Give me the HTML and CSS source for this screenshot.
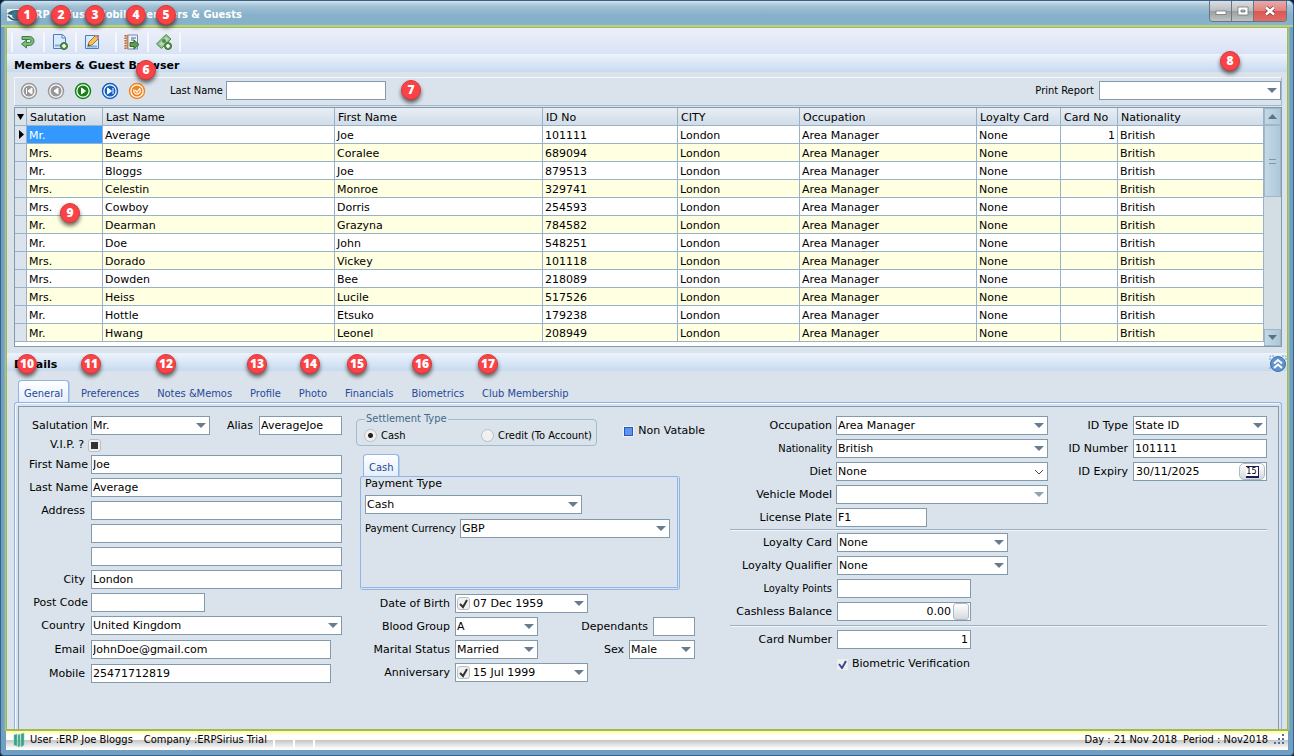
FILE: index.html
```html
<!DOCTYPE html>
<html lang="en">

<head>
    <meta charset="UTF-8">
    <meta name="viewport" content="width=device-width, initial-scale=1.0">
    <title>ERP Sirius - Mobile Members &amp; Guests</title>
    <link rel="stylesheet" href="styles.css">
</head>

<body>
    <div class="window">
        <header class="titlebar">
            <svg class="app-icon" width="18" height="12" viewBox="0 0 18 12">
                <rect width="18" height="12" fill="#e9f1f5" />
                <path d="M0 5C4 0 12 0 18 3v2C12 2 8 3 5 6z" fill="#2d6274" />
                <circle cx="9" cy="6" r="4" fill="#3b7f93" />
                <path d="M1 7c4 5 10 4 13 3" fill="none" stroke="#275668" stroke-width="1.5" />
            </svg>
            <h1>ERP Sirius - Mobile Members &amp; Guests</h1>
            <div class="win-buttons">
                <button type="button" aria-label="Minimize">
                    <svg width="12" height="12" viewBox="0 0 12 12"><rect x="1" y="6" width="10" height="3.500" fill="#fff" stroke="#777" stroke-width=".8" /></svg>
                </button>
                <button type="button" aria-label="Maximize">
                    <svg width="12" height="12" viewBox="0 0 12 12"><path d="M1 2h10v8H1zM4 5v2h4V5z" fill="#fff" fill-rule="evenodd" stroke="#777" stroke-width=".8" /></svg>
                </button>
                <button type="button" class="close" aria-label="Close">
                    <svg width="12" height="12" viewBox="0 0 12 12"><path d="M2 2.500l8 7M10 2.500l-8 7" stroke="#7d3a3a" stroke-width="4" /><path d="M2 2.500l8 7M10 2.500l-8 7" stroke="#fff" stroke-width="2.600" /></svg>
                </button>
            </div>
        </header>

        <main class="client">
            <nav class="toolbar">
                <button type="button" aria-label="Back">
                    <svg width="16" height="16" viewBox="0 0 16 16"><path d="M2 2.500h7.500a4.500 4.500 0 0 1 0 9H6.500V14L1.500 10l5-4v2.500h3a1.500 1.500 0 0 0 0-3H2z" fill="#7fb872" stroke="#3c8044" /></svg>
                </button>
                <button type="button" aria-label="New">
                    <svg width="16" height="16" viewBox="0 0 16 16"><path d="M1.500.500h9l3 3v11h-12z" fill="#d9eaff" stroke="#4a7cb8" /><path d="M10 1v3h3" fill="#fff" stroke="#4a7cb8" /><path d="M3 11.500h7" stroke="#7fa9dc" stroke-width="2" /><circle cx="12" cy="12" r="3.500" fill="#5f9450" stroke="#38702f" /><path d="M12 10v4M10 12h4" stroke="#fff" stroke-width="1.500" /></svg>
                </button>
                <button type="button" aria-label="Edit">
                    <svg width="16" height="16" viewBox="0 0 16 16"><path d="M1.500 1.500h13v13h-13z" fill="#d9eaff" stroke="#4a7cb8" /><path d="M3 12.500h10" stroke="#7fa9dc" stroke-width="2" /><path d="M4 12l1-4 7-7 3 3-7 7z" fill="#f5c35c" stroke="#a67428" /><path d="M11.500 1.500l3 3" stroke="#e08b85" stroke-width="2" /><path d="M4 12l.500-2 1.500 1.500z" fill="#333" /></svg>
                </button>
                <button type="button" class="gap-before" aria-label="Export">
                    <svg width="16" height="16" viewBox="0 0 16 16"><path d="M3.500 1h10v14h-10z" fill="#eef3fa" stroke="#6f87ab" /><path d="M1.500 1v14" stroke="#b5622e" stroke-width="2" stroke-dasharray="1.500 1" /><path d="M3.500 1v14" stroke="#c98256" stroke-width="2" /><path d="M7 4h5M7 6h3" stroke="#3d62a1" /><path d="M6 8.500h4V6l5 4.500-5 4.500v-2.500H6z" fill="#5f9e4c" stroke="#2f6d2d" /></svg>
                </button>
                <button type="button" aria-label="Add funds">
                    <svg width="16" height="16" viewBox="0 0 16 16"><path d="M.500 10l9.500-9.500 5 4.500-9.500 9.500z" fill="#8cbf88" stroke="#4d8b54" /><path d="M3 10l7-7 3 2-7 7z" fill="#b9dbb2" /><circle cx="8" cy="7" r="2" fill="#4d8b54" /><circle cx="12" cy="12" r="3.500" fill="#5f9450" stroke="#38702f" /><path d="M12 10v4M10 12h4" stroke="#fff" stroke-width="1.500" /></svg>
                </button>
            </nav>

            <h2 class="band">Members &amp; Guest Browser</h2>

            <section class="browser">
                <div class="search">
                    <div class="nav-buttons">
                        <button type="button" class="nav-grey" aria-label="First"><svg width="18" height="18" viewBox="0 0 18 18"><circle class="ring" cx="9" cy="9" r="7.500" /><circle class="disc" cx="9" cy="9" r="5.500" /><path d="M6.500 6v6M12 6L8 9l4 3z" class="glyph" /></svg></button>
                        <button type="button" class="nav-grey" aria-label="Previous"><svg width="18" height="18" viewBox="0 0 18 18"><circle class="ring" cx="9" cy="9" r="7.500" /><circle class="disc" cx="9" cy="9" r="5.500" /><path d="M11 6L7 9l4 3z" class="glyph" /></svg></button>
                        <button type="button" class="nav-green" aria-label="Next"><svg width="18" height="18" viewBox="0 0 18 18"><circle class="ring" cx="9" cy="9" r="7.500" /><circle class="disc" cx="9" cy="9" r="5.500" /><path d="M7.500 6l4 3-4 3z" class="glyph" /></svg></button>
                        <button type="button" class="nav-blue" aria-label="Last"><svg width="18" height="18" viewBox="0 0 18 18"><circle class="ring" cx="9" cy="9" r="7.500" /><circle class="disc" cx="9" cy="9" r="5.500" /><path d="M6.500 6l4 3-4 3zM12 6v6" class="glyph" /></svg></button>
                        <button type="button" class="nav-orange" aria-label="Refresh"><svg width="18" height="18" viewBox="0 0 18 18"><circle class="ring" cx="9" cy="9" r="7.500" /><circle class="disc" cx="9" cy="9" r="5.500" /><path d="M6 7.500a3.300 3.300 0 1 0 5.800-.500M7 8l2 2 3-4" fill="none" stroke="#fff" stroke-width="1.200" /></svg></button>
                    </div>
                    <label class="narrow" for="search">Last Name</label>
                    <input type="text" class="search-box" id="search">
                    <label class="narrow report-label" for="report">Print Report</label>
                    <select class="report-box" id="report"><option></option></select>
                </div>

                <div class="grid">
                    <div class="grid-rows">
                        <table>
                            <colgroup>
                                <col class="c-mark"><col class="c-sal"><col class="c-last"><col class="c-first"><col class="c-id"><col class="c-city"><col class="c-occ"><col class="c-loy"><col class="c-card"><col class="c-nat">
                            </colgroup>
                            <thead>
                                <tr><th><svg width="9" height="8" viewBox="0 0 9 8"><path d="M1 1h7L4.500 7z" /></svg></th><th>Salutation</th><th>Last Name</th><th>First Name</th><th>ID No</th><th>CITY</th><th>Occupation</th><th>Loyalty Card</th><th>Card No</th><th>Nationality</th></tr>
                            </thead>
                            <tbody>
                                <tr><td><svg width="9" height="9" viewBox="0 0 9 9"><path d="M3 0v9l5-4.500z" /></svg></td><td class="selected">Mr.</td><td>Average</td><td>Joe</td><td>101111</td><td>London</td><td>Area Manager</td><td>None</td><td>1</td><td>British</td></tr>
                                <tr><td></td><td>Mrs.</td><td>Beams</td><td>Coralee</td><td>689094</td><td>London</td><td>Area Manager</td><td>None</td><td></td><td>British</td></tr>
                                <tr><td></td><td>Mr.</td><td>Bloggs</td><td>Joe</td><td>879513</td><td>London</td><td>Area Manager</td><td>None</td><td></td><td>British</td></tr>
                                <tr><td></td><td>Mrs.</td><td>Celestin</td><td>Monroe</td><td>329741</td><td>London</td><td>Area Manager</td><td>None</td><td></td><td>British</td></tr>
                                <tr><td></td><td>Mrs.</td><td>Cowboy</td><td>Dorris</td><td>254593</td><td>London</td><td>Area Manager</td><td>None</td><td></td><td>British</td></tr>
                                <tr><td></td><td>Mr.</td><td>Dearman</td><td>Grazyna</td><td>784582</td><td>London</td><td>Area Manager</td><td>None</td><td></td><td>British</td></tr>
                                <tr><td></td><td>Mr.</td><td>Doe</td><td>John</td><td>548251</td><td>London</td><td>Area Manager</td><td>None</td><td></td><td>British</td></tr>
                                <tr><td></td><td>Mrs.</td><td>Dorado</td><td>Vickey</td><td>101118</td><td>London</td><td>Area Manager</td><td>None</td><td></td><td>British</td></tr>
                                <tr><td></td><td>Mrs.</td><td>Dowden</td><td>Bee</td><td>218089</td><td>London</td><td>Area Manager</td><td>None</td><td></td><td>British</td></tr>
                                <tr><td></td><td>Mrs.</td><td>Heiss</td><td>Lucile</td><td>517526</td><td>London</td><td>Area Manager</td><td>None</td><td></td><td>British</td></tr>
                                <tr><td></td><td>Mr.</td><td>Hottle</td><td>Etsuko</td><td>179238</td><td>London</td><td>Area Manager</td><td>None</td><td></td><td>British</td></tr>
                                <tr><td></td><td>Mr.</td><td>Hwang</td><td>Leonel</td><td>208949</td><td>London</td><td>Area Manager</td><td>None</td><td></td><td>British</td></tr>
                            </tbody>
                        </table>
                    </div>
                    <div class="scrollbar">
                        <button type="button" aria-label="Scroll up"><svg width="9" height="5" viewBox="0 0 9 5"><path d="M0 5h9L4.500 0z" fill="#5c7384" /></svg></button>
                        <div class="thumb"><span></span></div>
                        <button type="button" class="down" aria-label="Scroll down"><svg width="9" height="5" viewBox="0 0 9 5"><path d="M0 0h9L4.500 5z" fill="#5c7384" /></svg></button>
                    </div>
                </div>
            </section>

            <h2 class="band">Details
                <button type="button" class="collapse" aria-label="Collapse">
                    <svg width="18" height="18" viewBox="0 0 18 18"><path d="M1 5V1h4M13 1h4v4M1 12v3" fill="none" stroke="#6b9bd0" stroke-dasharray="2 1" /><circle cx="9" cy="9" r="7.500" fill="#5e93cd" stroke="#3c70ad" /><path d="M5 8.500l4-3.500 4 3.500M5 13l4-3.500 4 3.500" fill="none" stroke="#fff" stroke-width="2" /></svg>
                </button>
            </h2>

            <nav class="tabs">
                <a href="#general" class="tab active">General</a>
                <a href="#preferences" class="tab">Preferences</a>
                <a href="#notes" class="tab">Notes &amp;Memos</a>
                <a href="#profile" class="tab">Profile</a>
                <a href="#photo" class="tab">Photo</a>
                <a href="#financials" class="tab">Financials</a>
                <a href="#biometrics" class="tab">Biometrics</a>
                <a href="#club" class="tab">Club Membership</a>
            </nav>

            <form class="sheet" id="general">
                <div class="page">
                    <div class="col-person">
                        <div class="row">
                            <label for="salutation">Salutation</label>
                            <select class="w-sal" id="salutation"><option>Mr.</option></select>
                            <label class="alias-label" for="alias">Alias</label>
                            <input type="text" class="w-alias" id="alias" value="AverageJoe">
                        </div>
                        <div class="row vip">
                            <label for="vip">V.I.P. ?</label>
                            <input type="checkbox" class="box-square" id="vip">
                        </div>
                        <div class="row"><label for="first">First Name</label><input type="text" class="grow" id="first" value="Joe"></div>
                        <div class="row"><label for="last">Last Name</label><input type="text" class="grow" id="last" value="Average"></div>
                        <div class="row"><label class="inset" for="addr1">Address</label><input type="text" class="grow" id="addr1"></div>
                        <div class="row"><label for="addr2"></label><input type="text" class="grow" id="addr2" aria-label="Address line 2"></div>
                        <div class="row"><label for="addr3"></label><input type="text" class="grow" id="addr3" aria-label="Address line 3"></div>
                        <div class="row"><label class="inset" for="city">City</label><input type="text" class="grow" id="city" value="London"></div>
                        <div class="row"><label for="post">Post Code</label><input type="text" class="w-post" id="post"></div>
                        <div class="row"><label class="inset" for="country">Country</label><select class="grow" id="country"><option>United Kingdom</option></select></div>
                        <div class="row contact"><label class="inset" for="email">Email</label><input type="text" class="w-contact" id="email" value="JohnDoe@gmail.com"></div>
                        <div class="row contact"><label class="inset" for="mobile">Mobile</label><input type="text" class="w-contact" id="mobile" value="25471712819"></div>
                    </div>

                    <div class="col-payment">
                        <div class="settle-row">
                            <fieldset>
                                <legend>Settlement Type</legend>
                                <label class="narrow"><input type="radio" name="settle" checked>Cash</label>
                                <label class="narrow"><input type="radio" name="settle">Credit (To Account)</label>
                            </fieldset>
                            <label class="vatable"><input type="checkbox" class="box-blue">Non Vatable</label>
                        </div>
                        <div class="pay">
                            <a href="#cash" class="tab active">Cash</a>
                            <div class="pay-box" id="cash">
                                <label for="paytype">Payment Type</label>
                                <select class="w-paytype" id="paytype"><option>Cash</option></select>
                                <div class="pay-currency">
                                    <label class="narrow" for="currency">Payment Currency</label>
                                    <select class="grow" id="currency"><option>GBP</option></select>
                                </div>
                            </div>
                        </div>
                        <div class="status-rows">
                            <div class="row">
                                <label for="dob">Date of Birth</label>
                                <div class="date"><input type="checkbox" class="box-tick" aria-label="Date of birth set" checked><input type="text" id="dob" value="07 Dec 1959"><span class="arrow"></span></div>
                            </div>
                            <div class="row">
                                <label for="blood">Blood Group</label>
                                <select class="w-blood" id="blood"><option>A</option></select>
                                <label class="push" for="deps">Dependants</label>
                                <input type="text" class="w-deps" id="deps">
                            </div>
                            <div class="row">
                                <label for="marital">Marital Status</label>
                                <select class="w-blood" id="marital"><option>Married</option></select>
                                <label class="push" for="sex">Sex</label>
                                <select class="w-sex" id="sex"><option>Male</option></select>
                            </div>
                            <div class="row">
                                <label for="anniv">Anniversary</label>
                                <div class="date"><input type="checkbox" class="box-tick" aria-label="Anniversary set" checked><input type="text" id="anniv" value="15 Jul 1999"><span class="arrow"></span></div>
                            </div>
                        </div>
                    </div>

                    <div class="col-account">
                        <div class="account-top">
                            <div class="stack main">
                                <div class="row"><label for="occupation">Occupation</label><select class="w-occ" id="occupation"><option>Area Manager</option></select></div>
                                <div class="row"><label class="narrow" for="nationality">Nationality</label><select class="w-occ" id="nationality"><option>British</option></select></div>
                                <div class="row"><label for="diet">Diet</label><select class="w-occ chevron" id="diet"><option>None</option></select></div>
                                <div class="row"><label for="vehicle">Vehicle Model</label><select class="w-occ faded" id="vehicle"><option></option></select></div>
                                <div class="row"><label for="plate">License Plate</label><input type="text" class="w-plate" id="plate" value="F1"></div>
                            </div>
                            <div class="stack ids">
                                <div class="row"><label for="idtype">ID Type</label><select class="w-id" id="idtype"><option>State ID</option></select></div>
                                <div class="row"><label for="idnum">ID Number</label><input type="text" class="w-id" id="idnum" value="101111"></div>
                                <div class="row"><label for="idexp">ID Expiry</label>
                                    <div class="date w-id"><input type="text" id="idexp" value="30/11/2025"><button type="button" class="calendar"><span>15</span></button></div>
                                </div>
                            </div>
                        </div>
                        <div class="stack ruled">
                            <div class="row"><label for="loycard">Loyalty Card</label><select class="w-loy" id="loycard"><option>None</option></select></div>
                            <div class="row"><label for="loyq">Loyalty Qualifier</label><select class="w-loy" id="loyq"><option>None</option></select></div>
                            <div class="row"><label class="narrow" for="points">Loyalty Points</label><input type="text" class="w-id" id="points"></div>
                            <div class="row"><label for="balance">Cashless Balance</label>
                                <div class="date w-id"><input type="text" class="number" id="balance" value="0.00"><button type="button" class="blank" aria-label="Balance details"></button></div>
                            </div>
                        </div>
                        <div class="stack ruled card">
                            <div class="row"><label for="cardnum">Card Number</label><input type="text" class="w-id number" id="cardnum" value="1"></div>
                            <label class="verify"><input type="checkbox" class="box-check" checked>Biometric Verification</label>
                        </div>
                    </div>
                </div>
            </form>
        </main>

        <footer class="statusbar narrow">
            <svg width="12" height="16" viewBox="0 0 12 16"><path d="M1 3l3-1v12l-3-1zM5 3l2-1v12l-2 1zM8 2l3-1v12l-3 2z" fill="#3d9f86" stroke="#79c9b3" stroke-width=".6" /></svg>
            <span class="user">User :ERP Joe Bloggs</span>
            <span class="company">Company :ERPSirius Trial</span>
            <span class="slot"></span><span class="slot"></span><span class="slot"></span>
            <span class="day">Day : 21 Nov 2018</span>
            <span>Period : Nov2018</span>
            <svg class="grip" width="11" height="11" viewBox="0 0 11 11"><path d="M8 0h2v2H8zM4 4h2v2H4zM8 4h2v2H8zM0 8h2v2H0zM4 8h2v2H4zM8 8h2v2H8z" fill="#4f6f94" /></svg>
        </footer>

        <!-- numbered callouts -->
        <span class="pin p1">1</span>
        <span class="pin p2">2</span>
        <span class="pin p3">3</span>
        <span class="pin p4">4</span>
        <span class="pin p5">5</span>
        <span class="pin p6">6</span>
        <span class="pin p7">7</span>
        <span class="pin p8">8</span>
        <span class="pin p9">9</span>
        <span class="pin p10">10</span>
        <span class="pin p11">11</span>
        <span class="pin p12">12</span>
        <span class="pin p13">13</span>
        <span class="pin p14">14</span>
        <span class="pin p15">15</span>
        <span class="pin p16">16</span>
        <span class="pin p17">17</span>
    </div>
</body>

</html>
```
FILE: styles.css
```css
* {
    box-sizing: border-box;
    margin: 0;
    padding: 0;
}

body {
    background: #10202f;
    color: #000;
    font-family: "DejaVu Sans", Verdana, sans-serif;
    font-size: 11px;
    line-height: 14px;
}

button,
input,
select {
    font: inherit;
    color: inherit;
}

svg {
    display: block;
}

a {
    text-decoration: none;
}

.narrow {
    font-family: "DejaVu Sans Condensed", Tahoma, sans-serif;
}

/* window frame */
.window {
    position: relative;
    display: flex;
    flex-direction: column;
    min-height: 100vh;
    padding: 0 5px 5px 5px;
    border: 1px solid #36618c;
    border-radius: 6px 6px 4px 4px;
    background: #6f9fc2;
}

.titlebar {
    display: flex;
    align-items: center;
    height: 26px;
    margin: 0 -5px;
    padding: 4px 6px 0 6px;
    border-radius: 5px 5px 0 0;
    background: linear-gradient(#d3e3ec, #a3c2d5 5px, #87b1cb 14px, #87b2cc);
    border-bottom: 2px solid #b2d08a;
}

.titlebar h1 {
    margin-left: 3px;
    font-family: "DejaVu Sans Condensed", Tahoma, sans-serif;
    font-size: 11px;
    font-weight: bold;
    color: #fff;
    flex: 1;
}

.app-icon {
    flex: none;
}

.win-buttons {
    display: flex;
    align-self: flex-start;
    margin-top: -4px;
    border: 1px solid #6a7580;
    border-top: 0;
    border-radius: 0 0 4px 4px;
    overflow: hidden;
}

.win-buttons button {
    display: flex;
    align-items: center;
    justify-content: center;
    width: 22px;
    height: 20px;
    border: 0;
    border-right: 1px solid #6a7580;
    background: linear-gradient(#dcdfe1, #b9bcbe 50%, #9c9fa1 51%, #bfc1c2);
}

.win-buttons .close {
    width: 32px;
    border-right: 0;
    background: linear-gradient(#e9aaa7, #e0827f 50%, #d95753 51%, #e16d69);
}

.client {
    flex: 1;
    display: flex;
    flex-direction: column;
    border: 1px solid #a3b955;
    box-shadow: 0 0 2px 1px #b9d288;
    background: #dae3eb;
}

/* toolbar */
.toolbar {
    display: flex;
    align-items: center;
    height: 26px;
    padding: 2px 0 0 4px;
    background: linear-gradient(#ecf0f8, #d9e3f6);
}

.toolbar button {
    display: flex;
    align-items: center;
    justify-content: center;
    width: 32px;
    height: 20px;
    border: 0;
    border-left: 2px solid #f4f7fb;
    background: none;
}

.toolbar .gap-before {
    margin-left: 8px;
}

.toolbar button:last-child {
    width: 34px;
    border-right: 2px solid #f4f7fb;
}

.band {
    position: relative;
    height: 18px;
    padding-left: 7px;
    font-size: 11px;
    font-weight: bold;
    line-height: 24px;
    background: linear-gradient(#edf4fc, #c8daf0);
}

.collapse {
    position: absolute;
    top: 2px;
    right: 0;
    border: 0;
    background: none;
}

/* inputs */
input[type="text"],
select,
.date {
    height: 19px;
    min-width: 0;
    padding: 0 2px 1px 1px;
    border: 1px solid #819aae;
    border-radius: 0;
    background: #fff;
}

select {
    appearance: none;
    padding: 0 1px;
    background: #fff url("data:image/svg+xml,%3Csvg xmlns='http://www.w3.org/2000/svg' width='10' height='6'%3E%3Cpath d='M0 0h10L5 5z' fill='%23677d8f'/%3E%3C/svg%3E") no-repeat right 3px center;
}

select.faded {
    background-image: url("data:image/svg+xml,%3Csvg xmlns='http://www.w3.org/2000/svg' width='10' height='6'%3E%3Cpath d='M0 0h10L5 5z' fill='%2392a2b1'/%3E%3C/svg%3E");
}

select.chevron {
    background-image: url("data:image/svg+xml,%3Csvg xmlns='http://www.w3.org/2000/svg' width='10' height='6'%3E%3Cpath d='M1 1l4 4 4-4' fill='none' stroke='%23444'/%3E%3C/svg%3E");
}

.number {
    text-align: right;
}

input[type="checkbox"],
input[type="radio"] {
    appearance: none;
    flex: none;
    width: 13px;
    height: 13px;
    border: 1px solid #b9bfc4;
    border-radius: 3px;
    background: #f0f0f0 no-repeat center;
}

input[type="radio"] {
    border-radius: 50%;
}

input[type="radio"]:checked {
    background-image: radial-gradient(circle, #222 2px, transparent 3px);
}

input.box-square {
    background-image: linear-gradient(#333, #333);
    background-size: 7px 7px;
}

input.box-blue {
    width: 11px;
    height: 11px;
    border-color: #f3f3f3;
    border-radius: 0;
    background: #5b94f5;
    box-shadow: inset 0 0 0 1px #2f57b8;
}

input.box-tick {
    background-image: url("data:image/svg+xml,%3Csvg xmlns='http://www.w3.org/2000/svg' width='11' height='11'%3E%3Cpath d='M2 6l3 3 4-7' fill='none' stroke='%23333' stroke-width='2'/%3E%3C/svg%3E");
}

input.box-check {
    width: 11px;
    height: 11px;
    border-color: #eee;
    border-radius: 0;
    background-image: url("data:image/svg+xml,%3Csvg xmlns='http://www.w3.org/2000/svg' width='9' height='9'%3E%3Cpath d='M1 4l3 4 4-7' fill='none' stroke='%23384c9c' stroke-width='2'/%3E%3C/svg%3E");
}

.grow {
    flex: 1;
}

/* browser */
.browser {
    padding: 5px 5px 6px 7px;
}

.search {
    display: flex;
    align-items: center;
    height: 29px;
    padding: 0 0 2px 5px;
    border: 1px solid #9fb9cc;
    border-top-color: #f2f6fa;
    border-left-color: #f2f6fa;
}

.nav-buttons {
    display: flex;
    gap: 9px;
    margin-right: 24px;
}

.nav-buttons button {
    border: 0;
    background: none;
}

.ring {
    fill: #fff;
    stroke: currentColor;
    stroke-width: 1.5;
}

.disc {
    fill: currentColor;
}

.glyph {
    fill: #fff;
    stroke: #fff;
}

.nav-buttons .nav-grey {
    color: #989898;
}

.nav-buttons .nav-green {
    color: #178017;
}

.nav-buttons .nav-blue {
    color: #145fc0;
}

.nav-buttons .nav-orange {
    color: #ee8522;
}

.search-box {
    width: 160px;
    margin-left: 3px;
}

.report-label {
    margin-left: auto;
}

.report-box {
    width: 182px;
    margin-left: 5px;
}

.grid {
    display: flex;
    margin-top: 1px;
    border: 1px solid #819aae;
    background: #fff;
}

.grid-rows {
    flex: 1;
    padding-bottom: 4px;
}

table {
    width: 100%;
    table-layout: fixed;
    border-collapse: separate;
    border-spacing: 0;
}

th,
td {
    height: 18px;
    padding: 2px 2px 0 2px;
    border-right: 1px solid #98b3c9;
    border-bottom: 1px solid #98b3c9;
    text-align: left;
    font-weight: normal;
    line-height: 15px;
    white-space: nowrap;
}

th {
    padding-left: 3px;
    background: linear-gradient(#e9eef4, #d0dce7);
}

th:first-child,
td:first-child {
    padding: 0 1px;
    background: #dbe4ec;
}

td:nth-child(9) {
    text-align: right;
}

tbody tr:nth-child(even) {
    background: #ffffe1;
}

.selected {
    background: #3399ff;
    color: #fff;
}

.c-mark {
    width: 12px;
}

.c-sal {
    width: 76px;
}

.c-last {
    width: 232px;
}

.c-first {
    width: 208px;
}

.c-id {
    width: 135px;
}

.c-city {
    width: 122px;
}

.c-occ {
    width: 177px;
}

.c-loy {
    width: 84px;
}

.c-card {
    width: 57px;
}

.scrollbar {
    display: flex;
    flex-direction: column;
    width: 17px;
    background: #d3dde4;
}

.scrollbar button,
.thumb {
    display: flex;
    align-items: center;
    justify-content: center;
    height: 17px;
    border: 1px solid #9db8cb;
    background: linear-gradient(90deg, #c4d8e5, #aec8d9);
}

.thumb {
    height: 72px;
}

.thumb span {
    width: 7px;
    height: 5px;
    border: solid #7d98aa;
    border-width: 1px 0;
}

.scrollbar .down {
    margin-top: auto;
}

/* tabs */
.tabs {
    display: flex;
    align-items: flex-end;
    height: 31px;
    padding: 0 11px;
}

.tab {
    height: 22px;
    padding: 0 5px;
    font-family: "DejaVu Sans Condensed", Tahoma, sans-serif;
    line-height: 26px;
    color: #27489b;
    border: 1px solid transparent;
    border-bottom: 0;
    white-space: nowrap;
}

.tab + .tab {
    margin-left: 6px;
}

.tab.active {
    border-color: #8fb4e8;
    border-radius: 4px 4px 0 0;
    background: linear-gradient(#fff, #e4effc);
    box-shadow: 1px 0 0 #b4cdf0;
}

.sheet {
    flex: 1;
    display: flex;
    margin: 0 5px 0 7px;
    padding: 3px 2px 0 3px;
    border: 1px solid #8fb4e8;
    border-bottom: 0;
    border-radius: 3px 3px 0 0;
    box-shadow: inset 1px 1px 0 #f4f8fd;
}

.page {
    flex: 1;
    display: flex;
    padding: 9px 11px 10px 0;
    border: 1px solid #819aae;
    border-bottom: 0;
}

.row {
    display: flex;
    align-items: center;
    margin-bottom: 4px;
}

.row label {
    white-space: nowrap;
}

/* person column */
.col-person {
    width: 323px;
    margin-right: 14px;
}

.col-person .row label:first-child {
    width: 69px;
    margin-right: 3px;
    text-align: right;
}

.col-person .row .inset {
    padding-right: 3px;
}

.col-person .vip {
    height: 12px;
}

.col-person .vip label:first-child {
    margin-right: 0;
    padding-right: 4px;
}

.col-person .contact {
    margin: 5px 0;
}

.w-sal {
    width: 119px;
}

.alias-label {
    margin: 0 6px 0 auto;
}

.w-alias {
    width: 83px;
}

.w-post {
    width: 114px;
}

.w-contact {
    width: 240px;
}

/* payment column */
.col-payment {
    width: 349px;
    margin-right: 25px;
}

.settle-row {
    display: flex;
    align-items: center;
}

fieldset {
    display: flex;
    justify-content: space-between;
    width: 241px;
    height: 34px;
    margin-top: -4px;
    padding: 0 4px 0 7px;
    border: 1px solid #a3bccd;
    border-radius: 4px;
}

legend {
    margin-left: 1px;
    padding: 0 1px;
    font-family: "DejaVu Sans Condensed", Tahoma, sans-serif;
    color: #436a8a;
}

fieldset label,
.vatable,
.verify {
    display: flex;
    align-items: center;
    gap: 4px;
}

.vatable {
    margin-left: auto;
}

.pay {
    display: flex;
    flex-direction: column;
    align-items: flex-start;
    width: 320px;
    margin: 8px 0 4px 4px;
}

.pay .tab {
    margin-left: 3px;
}

.pay-box {
    width: 100%;
    height: 114px;
    padding: 0 4px;
    border: 3px double #8fb4e8;
    border-top: 1px solid #8fb4e8;
    border-left: 1px solid #8fb4e8;
    border-radius: 3px;
}

.pay-box > label {
    display: block;
    margin-bottom: 4px;
}

.w-paytype {
    display: block;
    width: 217px;
}

.pay-currency {
    display: flex;
    align-items: center;
    gap: 4px;
    margin: 5px 3px 0 0;
}

.status-rows {
    width: 339px;
}

.status-rows .row label:first-child {
    width: 94px;
    margin-right: 5px;
    text-align: right;
}

.date {
    display: flex;
    align-items: center;
    width: 133px;
    padding: 0 1px;
}

.date input[type="text"] {
    flex: 1;
    height: 17px;
    border: 0;
}

.box-tick + input[type="text"] {
    padding-left: 3px;
}

.arrow {
    margin-right: 2px;
    border: 5px solid transparent;
    border-top: 5px solid #677d8f;
    border-bottom: 0;
}

.w-blood {
    width: 83px;
}

.push {
    margin: 0 5px 0 auto;
}

.w-deps {
    width: 42px;
}

.w-sex {
    width: 66px;
}

/* account column */
.col-account {
    flex: 1;
}

.account-top {
    display: flex;
    justify-content: space-between;
    margin-bottom: -2px;
}

.stack .row label {
    width: 102px;
    margin-right: 5px;
    text-align: right;
}

.stack.main .row label {
    margin-right: 4px;
}

.stack.ids .row label {
    width: auto;
    margin-left: auto;
}

.w-occ {
    width: 212px;
}

.w-plate {
    width: 91px;
}

.w-id {
    width: 134px;
}

.w-loy {
    width: 171px;
}

.ruled {
    padding-top: 3px;
    border-top: 1px solid #9ab1c4;
    box-shadow: inset 0 1px 0 #f2f6fa;
}

.card {
    padding-top: 4px;
}

.verify {
    margin: 8px 0 0 107px;
}

.calendar,
.blank {
    width: 26px;
    height: 17px;
    border: 1px solid #aebbc6;
    border-radius: 5px;
    background: linear-gradient(#fff, #d5d9dd);
}

.blank {
    width: 16px;
    border-radius: 3px;
}

.calendar span {
    display: block;
    width: 13px;
    margin: 0 auto;
    border: solid #1c1c50;
    border-width: 1px 1px 2px 0;
    font-family: "DejaVu Sans Condensed", Tahoma, sans-serif;
    font-size: 9px;
    line-height: 9px;
    text-align: center;
    background: #fff;
}

/* status bar */
.statusbar {
    display: flex;
    align-items: center;
    height: 20px;
    padding: 0 3px 2px 7px;
    border-top: 1px solid #a3b955;
    background: linear-gradient(#ffff8f, #fff 4px, #fff 9px, #c4c4c4 9px, #fff 18px);
}

.statusbar .user {
    margin-left: 5px;
}

.statusbar .company {
    margin: 0 6px 0 11px;
}

.slot {
    width: 20px;
    height: 8px;
    align-self: flex-end;
    border-left: 2px solid #fff;
}

.day {
    margin: 0 6px 0 auto;
}

.grip {
    margin-left: 6px;
}

/* callouts */
.pin {
    position: absolute;
    width: 20px;
    height: 20px;
    border: 1px solid #d9363b;
    border-radius: 50%;
    background: #fa4347;
    box-shadow: 0 3px 4px rgba(0, 0, 0, .6);
    color: #fff;
    font-family: "Open Sans", sans-serif;
    font-size: 12px;
    font-weight: 800;
    line-height: 18px;
    text-align: center;
}

.p1, .p2, .p3, .p4, .p5 {
    top: 4px;
}

.p1, .p10 {
    left: 16px;
}

.p2 {
    left: 50px;
}

.p3 {
    left: 84px;
}

.p4 {
    left: 125px;
}

.p5 {
    left: 155px;
}

.p6 {
    top: 59px;
    left: 135px;
}

.p7 {
    top: 79px;
    left: 400px;
}

.p8 {
    top: 50px;
    right: 53px;
}

.p9 {
    top: 202px;
    left: 59px;
}

.p10, .p11, .p12, .p13, .p14, .p15, .p16, .p17 {
    top: 353px;
}

.p11 {
    left: 80px;
}

.p12 {
    left: 155px;
}

.p13 {
    left: 246px;
}

.p14 {
    left: 299px;
}

.p15 {
    left: 346px;
}

.p16 {
    left: 411px;
}

.p17 {
    left: 477px;
}
```
